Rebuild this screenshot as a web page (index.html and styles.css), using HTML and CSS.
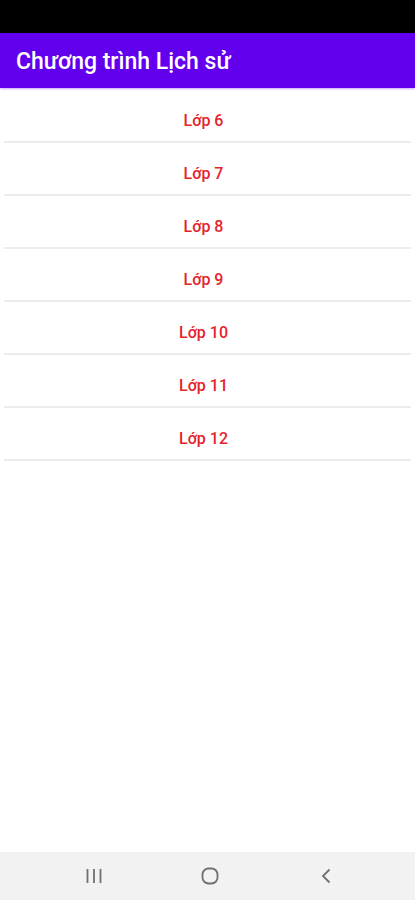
FILE: index.html
```html
<!DOCTYPE html>
<html>
<head>
    <title>Chương trình Lịch sử</title>
    <link rel="stylesheet" href="styles.css">
</head>
<body>
    <div class="status-bar"></div>
    <div class="app-bar">
        <h1 class="app-title">Chương trình Lịch sử</h1>
    </div>
    <div class="content">
        <ul class="grade-list">
            <li class="grade-item">Lớp 6</li>
            <li class="grade-item">Lớp 7</li>
            <li class="grade-item">Lớp 8</li>
            <li class="grade-item">Lớp 9</li>
            <li class="grade-item">Lớp 10</li>
            <li class="grade-item">Lớp 11</li>
            <li class="grade-item">Lớp 12</li>
        </ul>
    </div>
    <div class="nav-bar">
        <svg class="nav-icon" width="18" height="16" viewBox="0 0 18 16">
            <path d="M2.5 1v14M9 1v14M15.5 1v14" stroke="#707070" stroke-width="1.8" fill="none"/>
        </svg>
        <svg class="nav-icon" width="18" height="18" viewBox="0 0 18 18">
            <rect x="1.5" y="1.5" width="15" height="15" rx="6" stroke="#707070" stroke-width="1.8" fill="none"/>
        </svg>
        <svg class="nav-icon" width="18" height="16" viewBox="0 0 18 16">
            <path d="M12.5 1.5L6 8l6.5 6.5" stroke="#707070" stroke-width="1.8" fill="none"/>
        </svg>
    </div>
</body>
</html>
```

FILE: styles.css
```css
html, body {
    margin: 0;
    padding: 0;
    height: 100%;
}
body {
    font-family: Roboto, "Noto Sans", Arial, sans-serif;
    background-color: white;
    display: flex;
    flex-direction: column;
}
.status-bar {
    height: 33px;
    background-color: #000;
}
.app-bar {
    height: 55px;
    background-color: #6200ee;
    display: flex;
    align-items: center;
    padding: 0 16px;
    box-shadow: 0 1px 2px rgba(98, 0, 238, 0.35);
    position: relative;
}
.app-title {
    margin: 0;
    color: white;
    font-size: 23px;
    font-weight: 500;
    padding-top: 2px;
}
.content {
    flex: 1;
    padding: 2px 4px 0 4px;
}
.grade-list {
    list-style: none;
    margin: 0;
    padding: 0;
}
.grade-item {
    height: 53px;
    box-sizing: border-box;
    padding: 22px 8px 0 0;
    line-height: 18px;
    text-align: center;
    color: #e5232b;
    font-size: 16px;
    font-weight: 500;
    border-bottom: 2px solid #ececec;
}
.nav-bar {
    height: 48px;
    background-color: #f2f2f2;
    display: flex;
    justify-content: center;
    align-items: center;
    gap: 98px;
    padding-left: 4px;
}
```
